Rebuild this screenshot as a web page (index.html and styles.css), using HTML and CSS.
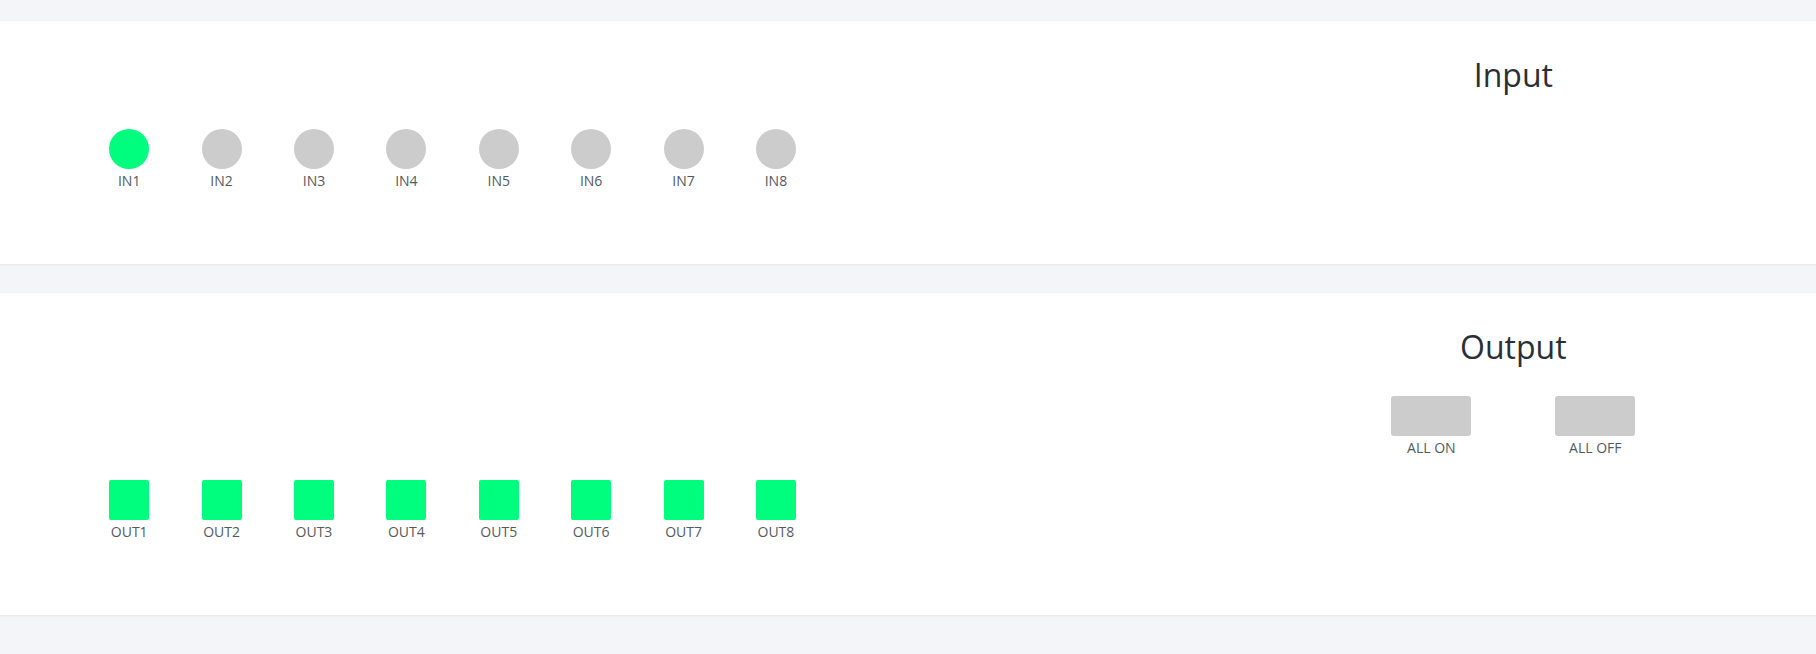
FILE: index.html
```html
<!DOCTYPE html>
<html lang="en">

<head>
  <meta charset="UTF-8">
  <title>IO Panel</title>
  <link rel="stylesheet" href="styles.css">
</head>

<body>
  <div class="card">
    <div class="io-col io-col-input">
      <div class="io-item"><div class="led led-in on"></div><span class="io-label">IN1</span></div>
      <div class="io-item"><div class="led led-in"></div><span class="io-label">IN2</span></div>
      <div class="io-item"><div class="led led-in"></div><span class="io-label">IN3</span></div>
      <div class="io-item"><div class="led led-in"></div><span class="io-label">IN4</span></div>
      <div class="io-item"><div class="led led-in"></div><span class="io-label">IN5</span></div>
      <div class="io-item"><div class="led led-in"></div><span class="io-label">IN6</span></div>
      <div class="io-item"><div class="led led-in"></div><span class="io-label">IN7</span></div>
      <div class="io-item"><div class="led led-in"></div><span class="io-label">IN8</span></div>
    </div>
    <div class="side-col">
      <h3 class="card-title">Input</h3>
    </div>
  </div>

  <div class="card">
    <div class="io-col io-col-output">
      <div class="io-item"><div class="led led-out on"></div><span class="io-label">OUT1</span></div>
      <div class="io-item"><div class="led led-out on"></div><span class="io-label">OUT2</span></div>
      <div class="io-item"><div class="led led-out on"></div><span class="io-label">OUT3</span></div>
      <div class="io-item"><div class="led led-out on"></div><span class="io-label">OUT4</span></div>
      <div class="io-item"><div class="led led-out on"></div><span class="io-label">OUT5</span></div>
      <div class="io-item"><div class="led led-out on"></div><span class="io-label">OUT6</span></div>
      <div class="io-item"><div class="led led-out on"></div><span class="io-label">OUT7</span></div>
      <div class="io-item"><div class="led led-out on"></div><span class="io-label">OUT8</span></div>
    </div>
    <div class="side-col">
      <h3 class="card-title">Output</h3>
      <div class="all-buttons">
        <div class="io-item"><button class="all-btn"></button><span class="io-label">ALL ON</span></div>
        <div class="io-item"><button class="all-btn"></button><span class="io-label">ALL OFF</span></div>
      </div>
    </div>
  </div>
</body>

</html>
```

FILE: styles.css
```css
body {
  font-family: 'Open Sans', 'Noto Sans', sans-serif;
  margin: 0;
  padding-top: 21px;
  background-color: #f4f5f8;
  color: #2a2f35;
}

.card {
  display: flex;
  background: #ffffff;
  margin-bottom: 29px;
  box-shadow: 0 1px 2px rgba(0, 0, 0, 0.06);
}

.io-col {
  width: 66.6667%;
  display: flex;
  align-items: flex-start;
  padding-left: 83px;
  padding-bottom: 75px;
  box-sizing: border-box;
}

.io-col-input {
  padding-top: 108px;
}

.io-col-output {
  padding-top: 187px;
}

.io-item {
  width: 92.4px;
  display: flex;
  flex-direction: column;
  align-items: center;
}

.led {
  width: 40px;
  height: 40px;
  background-color: #cccccc;
}

.led-in {
  border-radius: 50%;
}

.led-out {
  border-radius: 2px;
}

.led.on {
  background-color: #00fe7e;
}

.io-label {
  margin-top: 3px;
  font-size: 14px;
  line-height: 17px;
  color: #555a60;
  white-space: nowrap;
}

.side-col {
  width: 33.3333%;
  text-align: center;
}

.card-title {
  margin: 35px 0 0;
  font-size: 32px;
  font-weight: 400;
  line-height: 1.2;
  color: #2a2f35;
}

.all-buttons {
  display: flex;
  justify-content: center;
  gap: 84px;
  margin-top: 30px;
}

.all-buttons .io-item {
  width: 80px;
}

.all-btn {
  width: 80px;
  height: 40px;
  padding: 0;
  border: none;
  border-radius: 3px;
  background-color: #cccccc;
}
```
